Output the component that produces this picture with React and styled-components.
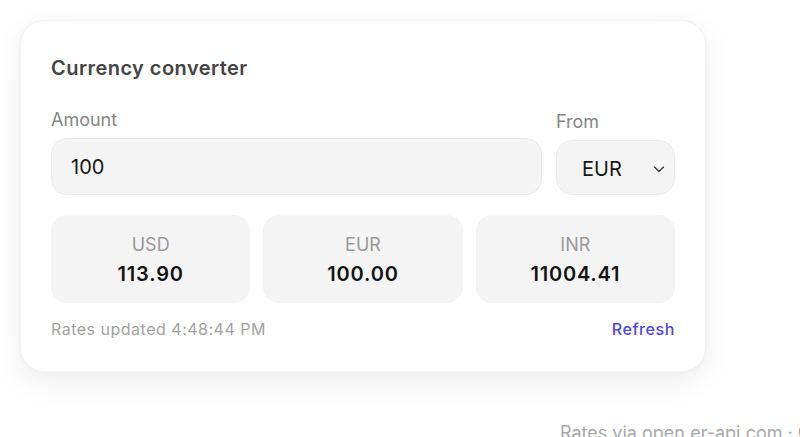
import React from "react";
import styled, { createGlobalStyle } from "styled-components";

const Global = createGlobalStyle`
  html, body { margin: 0; padding: 0; background: #ffffff; }
  body { font-family: Inter, "Noto Sans", "Liberation Sans", sans-serif; -webkit-font-smoothing: antialiased; }
  * { box-sizing: border-box; }
`;

const Page = styled.div`
  width: 800px;
  height: 437px;
  overflow: hidden;
  padding: 20px 0 0 20px;
  display: flex;
  flex-direction: column;
`;

const Card = styled.div`
  flex-shrink: 0;
  width: 686px;
  height: 352px;
  background: #fff;
  border-radius: 24px;
  border: 1px solid #f1f1f1;
  box-shadow: 0 10px 30px rgba(0, 0, 0, 0.07), 0 1px 4px rgba(0, 0, 0, 0.03);
  padding: 34px 30px 0 30px;
  display: flex;
  flex-direction: column;
`;

const Title = styled.h2`
  margin: 0;
  font-size: 20px;
  line-height: 26px;
  font-weight: 600;
  color: #444;
  letter-spacing: 0.45px;
`;

const InputRow = styled.div`
  margin-top: 28px;
  display: flex;
  align-items: flex-end;
  gap: 14px;
`;

const Field = styled.label`
  display: flex;
  flex-direction: column;
  gap: ${(p) => p.$gap || 8}px;
  flex: ${(p) => (p.$grow ? 1 : "none")};
`;

const Label = styled.span`
  font-size: 18px;
  line-height: 21px;
  color: #858585;
`;

const AmountInput = styled.div`
  height: 57px;
  border-radius: 16px;
  background: #f4f4f4;
  border: 1px solid #ebebeb;
  display: flex;
  align-items: center;
  padding: 0 19px;
  font-size: 20px;
  color: #161616;
`;

const Select = styled.div`
  width: 119px;
  height: 55px;
  border-radius: 16px;
  background: #f4f4f4;
  border: 1px solid #ebebeb;
  display: flex;
  align-items: center;
  justify-content: space-between;
  padding: 2px 8px 0 25px;
  font-size: 20px;
  color: #161616;
`;

const Results = styled.div`
  margin-top: 20px;
  display: grid;
  grid-template-columns: repeat(3, 1fr);
  gap: 13px;
`;

const Tile = styled.div`
  height: 88px;
  border-radius: 16px;
  background: #f4f4f4;
  display: flex;
  flex-direction: column;
  align-items: center;
  justify-content: center;
  gap: 7px;
  padding-top: 1px;
`;

const Code = styled.span`
  font-size: 18px;
  line-height: 21px;
  color: #9a9a9a;
`;

const Value = styled.span`
  font-size: 20px;
  line-height: 24px;
  font-weight: 600;
  color: #141414;
  letter-spacing: 0.8px;
`;

const Footer = styled.div`
  margin-top: 16px;
  display: flex;
  justify-content: space-between;
  align-items: center;
`;

const Updated = styled.span`
  font-size: 16px;
  color: #a2a2a2;
  letter-spacing: 0.5px;
`;

const Refresh = styled.button`
  border: none;
  background: none;
  padding: 0;
  font-family: inherit;
  font-size: 16px;
  font-weight: 500;
  color: #4f46e5;
  letter-spacing: 0.6px;
  cursor: pointer;
`;

const Credit = styled.div`
  flex-shrink: 0;
  margin-top: 51px;
  padding-left: 540px;
  font-size: 18px;
  line-height: 20px;
  color: #a8a8a8;
  white-space: nowrap;
`;

const Chevron = () => (
  <svg width="14" height="14" viewBox="0 0 14 14" fill="none">
    <polyline points="2.5,5 7,9.5 11.5,5" stroke="#333" strokeWidth="1.3" strokeLinecap="round" strokeLinejoin="round" />
  </svg>
);

const rates = [
  { code: "USD", value: "113.90" },
  { code: "EUR", value: "100.00" },
  { code: "INR", value: "11004.41" },
];

export default function App() {
  return (
    <>
      <Global />
      <Page>
        <Card>
          <Title>Currency converter</Title>
          <InputRow>
            <Field $grow $gap={8}>
              <Label>Amount</Label>
              <AmountInput>100</AmountInput>
            </Field>
            <Field $gap={8}>
              <Label>From</Label>
              <Select>
                EUR
                <Chevron />
              </Select>
            </Field>
          </InputRow>
          <Results>
            {rates.map((r) => (
              <Tile key={r.code}>
                <Code>{r.code}</Code>
                <Value>{r.value}</Value>
              </Tile>
            ))}
          </Results>
          <Footer>
            <Updated>Rates updated 4:48:44 PM</Updated>
            <Refresh>Refresh</Refresh>
          </Footer>
        </Card>
        <Credit>Rates via open.er-api.com · Cached</Credit>
      </Page>
    </>
  );
}
